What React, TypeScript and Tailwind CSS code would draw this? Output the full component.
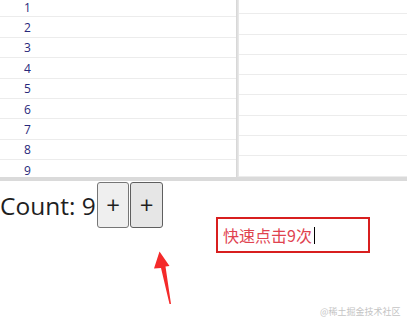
import React from 'react'

const rows = [1, 2, 3, 4, 5, 6, 7, 8, 9]

function Arrow() {
  return (
    <svg className="absolute left-[150px] top-[248px]" width="26" height="60" viewBox="0 0 26 60">
      <polygon points="9.5,3.5 19.5,18 15.5,18.5 21,56 19.5,56 11,20 4,20.5" fill="#f42a2a" />
    </svg>
  )
}

export default function App() {
  return (
    <div className="relative w-[407px] h-[328px] bg-white overflow-hidden" style={{ fontFamily: '"Open Sans", "Noto Sans CJK SC", sans-serif' }}>
      {/* scrolled list area */}
      <div className="flex h-[181px] border-b-[4px] border-[#dadada]">
        <div className="w-[236px] overflow-hidden">
          <div className="-mt-[3px]">
            {rows.map((n) => (
              <div key={n} className="h-[20.4px] flex items-center border-b border-[#ececec] pl-[24px] pt-[2px] text-[12px] leading-none text-[#28287a]">
                {n}
              </div>
            ))}
          </div>
        </div>
        <div className="w-[3px] bg-gradient-to-r from-[#d4d4d4] to-[#ebebeb]" />
        <div className="flex-1 overflow-hidden">
          <div className="-mt-[6px]">
            {rows.map((n) => (
              <div key={n} className="h-[20.3px] border-b border-[#ececec]" />
            ))}
          </div>
        </div>
      </div>

      {/* counter */}
      <div className="flex items-center mt-[1px] text-[#1f1f1f]">
        <span className="text-[24.5px] leading-none pt-[2px] w-[97px] shrink-0 whitespace-nowrap">Count: 9</span>
        <button className="h-[46px] w-[32px] shrink-0 bg-[#efefef] border border-[#767676] rounded-[3px] text-[24px] leading-none">+</button>
        <button className="h-[46px] w-[33px] shrink-0 ml-[1px] bg-[#e6e6e6] border border-[#5f5f5f] rounded-[3px] text-[24px] leading-none">+</button>
      </div>

      {/* annotation box */}
      <div className="absolute left-[216px] top-[217px] w-[154px] h-[36px] border-2 border-[#d81f1f] flex items-center pl-[5px]">
        <span className="text-[16px] leading-none text-[#e0434f]" style={{ fontFamily: '"Noto Sans CJK SC", sans-serif' }}>快速点击9次</span>
        <span className="w-px h-[17px] bg-black ml-[2px]" />
      </div>

      <Arrow />

      <div className="absolute left-[320px] top-[305px] text-[9px] text-[#c4c4c4]" style={{ fontFamily: '"Noto Sans CJK SC", sans-serif' }}>
        @稀土掘金技术社区
      </div>
    </div>
  )
}
